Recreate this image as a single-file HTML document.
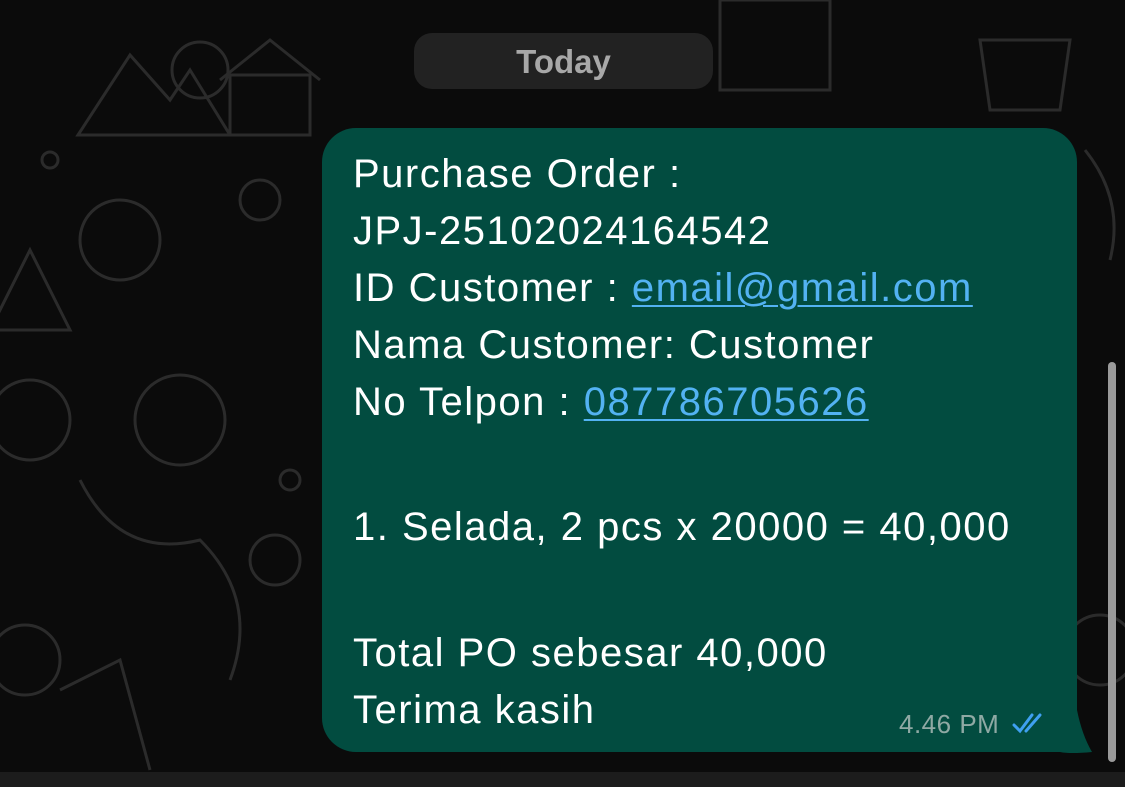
<!DOCTYPE html>
<html><head><style>
html,body{margin:0;padding:0;width:1125px;height:787px;overflow:hidden;background:#0b0b0b;font-family:"Liberation Sans",sans-serif}
.bg{position:absolute;inset:0}
.pill{position:absolute;left:414px;top:33px;width:299px;height:56px;border-radius:18px;background:#222;color:#a8a8a8;font-weight:bold;font-size:33px;text-align:center;line-height:58px}
.bub{position:absolute;left:322px;top:128px;width:755px;height:624px;background:#024c40;border-radius:34px 34px 0 34px}
.t{position:absolute;left:353px;color:#fff;font-size:40px;letter-spacing:1.5px;white-space:nowrap;line-height:1}
.l{color:#53b2f2;text-decoration:underline;text-decoration-thickness:2px;text-underline-offset:4px}
.time{position:absolute;left:899px;top:709px;color:#8fa9a4;font-size:26px;letter-spacing:0.5px}
.sb{position:absolute;left:1108px;top:362px;width:8px;height:400px;border-radius:4px;background:#9a9a9a}
.bot{position:absolute;left:0;top:772px;width:1125px;height:15px;background:#1c1c1c}
</style></head><body>
<svg class="bg" width="1125" height="787" fill="none" stroke="#2b2b2b" stroke-width="3">
<path d="M78 135 L130 55 L170 100 L190 70 L230 135 Z"/><rect x="230" y="75" width="80" height="60"/><path d="M220 80 L270 40 L320 80"/>
<circle cx="200" cy="70" r="28"/><rect x="720" y="0" width="110" height="90"/><path d="M980 40 L1070 40 L1060 110 L990 110 Z"/>
<circle cx="30" cy="420" r="40"/><circle cx="120" cy="240" r="40"/><path d="M30 250 L70 330 L-10 330 Z"/>
<circle cx="180" cy="420" r="45"/><path d="M80 480 Q120 560 200 540 Q260 600 230 680"/><circle cx="25" cy="660" r="35"/>
<path d="M60 690 L120 660 L150 770"/><circle cx="260" cy="200" r="20"/><circle cx="275" cy="560" r="25"/>
<path d="M1085 150 Q1125 200 1110 260"/><circle cx="1100" cy="650" r="35"/><circle cx="50" cy="160" r="8"/><circle cx="290" cy="480" r="10"/>
</svg>
<div class="pill">Today</div>
<div class="bub"></div>
<svg style="position:absolute;left:1060px;top:710px" width="40" height="45"><path d="M0 0 L17 0 Q22 25 32 42 Q10 44 0 42 Z" fill="#024c40"/></svg>
<div class="t" style="top:154px">Purchase Order :</div>
<div class="t" style="top:211px">JPJ-25102024164542</div>
<div class="t" style="top:268px">ID Customer : <span class="l">email@gmail.com</span></div>
<div class="t" style="top:325px">Nama Customer: Customer</div>
<div class="t" style="top:382px">No Telpon : <span class="l">087786705626</span></div>
<div class="t" style="top:507px">1. Selada, 2 pcs x 20000 = 40,000</div>
<div class="t" style="top:633px">Total PO sebesar 40,000</div>
<div class="t" style="top:690px">Terima kasih</div>
<div class="time">4.46 PM</div>
<svg style="position:absolute;left:1012px;top:711px" width="36" height="24" fill="none" stroke="#3fa0f0" stroke-width="3" stroke-linecap="round"><path d="M2 14 L8 20 L20 4"/><path d="M14 20 L28 4"/></svg>
<div class="sb"></div>
<div class="bot"></div>
</body></html>
